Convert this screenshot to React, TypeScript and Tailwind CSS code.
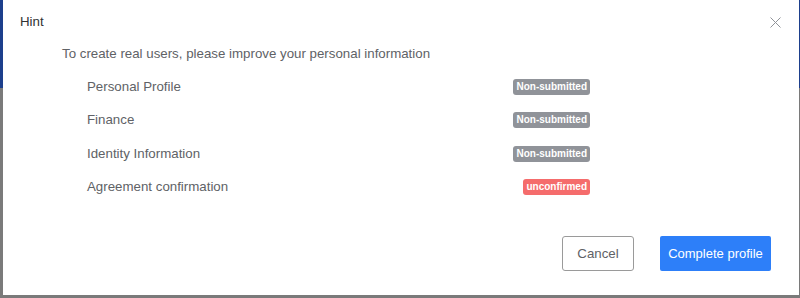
import React from "react";

const items = [
  { label: "Personal Profile", status: "Non-submitted", red: false },
  { label: "Finance", status: "Non-submitted", red: false },
  { label: "Identity Information", status: "Non-submitted", red: false },
  { label: "Agreement confirmation", status: "unconfirmed", red: true },
];

export default function App() {
  return (
    <div className="flex w-[800px] h-[298px] bg-[#7a7a7a] overflow-hidden" style={{ fontFamily: '"Liberation Sans", Arial, sans-serif' }}>
      <div className="flex flex-col w-[3px] shrink-0">
        <div className="h-[88px] bg-[#1d3f8c]" />
        <div className="flex-1 bg-[#7a7a7a]" />
      </div>
      <div className="flex flex-col w-[796px] h-[295px] bg-white shrink-0 text-[#606266]">
        <div className="flex items-center justify-between h-[44px] pl-[17px] pr-[18px]">
          <span className="text-[13.3px] text-[#303133]">Hint</span>
          <svg width="11" height="11" viewBox="0 0 11 11" className="text-[#909399]">
            <path d="M0.5 0.5 L10.5 10.5 M10.5 0.5 L0.5 10.5" stroke="currentColor" strokeWidth="1" />
          </svg>
        </div>
        <div className="pl-[59px] text-[13.3px] leading-[20px]">To create real users, please improve your personal information</div>
        <div className="flex flex-col w-[587px] pl-[84px] mt-[6px]">
          {items.map((it) => (
            <div key={it.label} className="flex items-center justify-between h-[33.5px]">
              <span className="text-[13.3px]">{it.label}</span>
              <span
                className={
                  "px-[3px] h-[16px] leading-[16px] rounded-[3px] text-[10px] font-bold text-white " +
                  (it.red ? "bg-[#f56c6c]" : "bg-[#909399]")
                }
              >
                {it.status}
              </span>
            </div>
          ))}
        </div>
        <div className="flex justify-end gap-[26px] pr-[28px] mt-auto mb-[24px]">
          <button className="w-[72px] h-[35px] border border-[#9a9a9a] rounded-[3px] text-[13.3px] text-[#606266] bg-white">Cancel</button>
          <button className="w-[111px] h-[35px] rounded-[2px] text-[13px] text-white bg-[#2d7ff9]">Complete profile</button>
        </div>
      </div>
      <div className="flex flex-col w-[1px] shrink-0">
        <div className="h-[88px] bg-[#1d3f8c]" />
        <div className="flex-1 bg-[#7a7a7a]" />
      </div>
    </div>
  );
}
